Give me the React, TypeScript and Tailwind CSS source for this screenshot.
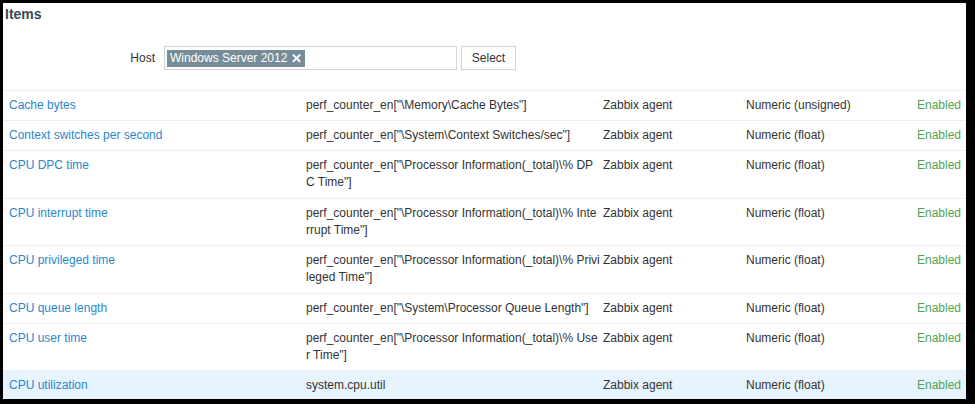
import React from 'react';

type Item = {
  name: string;
  key: string[];
  type: string;
  valueType: string;
  status: string;
  highlight?: boolean;
};

const items: Item[] = [
  { name: 'Cache bytes', key: ['perf_counter_en["\\Memory\\Cache Bytes"]'], type: 'Zabbix agent', valueType: 'Numeric (unsigned)', status: 'Enabled' },
  { name: 'Context switches per second', key: ['perf_counter_en["\\System\\Context Switches/sec"]'], type: 'Zabbix agent', valueType: 'Numeric (float)', status: 'Enabled' },
  { name: 'CPU DPC time', key: ['perf_counter_en["\\Processor Information(_total)\\% DP', 'C Time"]'], type: 'Zabbix agent', valueType: 'Numeric (float)', status: 'Enabled' },
  { name: 'CPU interrupt time', key: ['perf_counter_en["\\Processor Information(_total)\\% Inte', 'rrupt Time"]'], type: 'Zabbix agent', valueType: 'Numeric (float)', status: 'Enabled' },
  { name: 'CPU privileged time', key: ['perf_counter_en["\\Processor Information(_total)\\% Privi', 'leged Time"]'], type: 'Zabbix agent', valueType: 'Numeric (float)', status: 'Enabled' },
  { name: 'CPU queue length', key: ['perf_counter_en["\\System\\Processor Queue Length"]'], type: 'Zabbix agent', valueType: 'Numeric (float)', status: 'Enabled' },
  { name: 'CPU user time', key: ['perf_counter_en["\\Processor Information(_total)\\% Use', 'r Time"]'], type: 'Zabbix agent', valueType: 'Numeric (float)', status: 'Enabled' },
  { name: 'CPU utilization', key: ['system.cpu.util'], type: 'Zabbix agent', valueType: 'Numeric (float)', status: 'Enabled', highlight: true },
];

const App: React.FC = () => {
  return (
    <div className="w-[975px] h-[404px] bg-black pt-[3px] pl-[3px] pr-[9px] pb-[5px] font-['Liberation_Sans',Arial,sans-serif] text-[12px]">
      <div className="w-full h-full bg-white overflow-hidden">
        {/* header */}
        <h1 className="mt-[3px] ml-[2px] text-[14px] leading-[16px] font-bold text-[#384956]">Items</h1>

        {/* filter */}
        <div className="flex items-center mt-[24px]">
          <label className="w-[152px] text-right text-[#333]">Host</label>
          <div className="ml-[9px] w-[293px] h-[24px] border border-[#cfd6da] flex items-center px-[2px]">
            <span className="flex items-center h-[17px] bg-[#768d99] text-white px-[3px] leading-[17px]">
              Windows Server 2012
              <span className="ml-[4px] text-[13px] font-bold leading-none">✕</span>
            </span>
          </div>
          <button className="ml-[4px] w-[55px] h-[24px] border border-[#cfd6da] bg-white text-[#333]">Select</button>
        </div>

        {/* table */}
        <table className="mt-[20px] w-full table-fixed border-collapse">
          <colgroup>
            <col className="w-[297px]" />
            <col className="w-[297px]" />
            <col className="w-[143px]" />
            <col className="w-[140px]" />
            <col />
          </colgroup>
          <tbody>
            {items.map((item) => (
              <tr
                key={item.name}
                className={`border-t border-[#eceff1] align-top leading-[17px] ${item.highlight ? 'bg-[#e8f4fd]' : ''}`}
              >
                <td className="pl-[6px] pr-[6px] py-[6px] text-[#2b87cc]">{item.name}</td>
                <td className={`pl-[6px] pr-[4px] pt-[6px] whitespace-nowrap text-[#333] ${item.key.length > 1 ? 'pb-[6.5px]' : 'pb-[6px]'}`}>
                  {item.key.map((line) => (
                    <div key={line}>{line}</div>
                  ))}
                </td>
                <td className="pl-[6px] py-[6px] text-[#333]">{item.type}</td>
                <td className="pl-[6px] py-[6px] text-[#333]">{item.valueType}</td>
                <td className="pr-[5px] py-[6px] text-right text-[#4fa553]">{item.status}</td>
              </tr>
            ))}
          </tbody>
        </table>
      </div>
    </div>
  );
};

export default App;
